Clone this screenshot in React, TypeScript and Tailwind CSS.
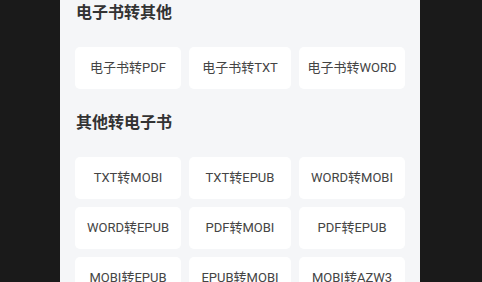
const toOther = ["电子书转PDF", "电子书转TXT", "电子书转WORD"];
const toEbook = [
  "TXT转MOBI",
  "TXT转EPUB",
  "WORD转MOBI",
  "WORD转EPUB",
  "PDF转MOBI",
  "PDF转EPUB",
  "MOBI转EPUB",
  "EPUB转MOBI",
  "MOBI转AZW3",
];

function Section({ title, items }: { title: string; items: string[] }) {
  return (
    <section>
      <h2 className="text-[16px] leading-[24px] font-semibold text-[#333333] pl-px">{title}</h2>
      <div className="mt-[22px] grid grid-cols-[106px_102px_106px] gap-2">
        {items.map((item) => (
          <div
            key={item}
            className="h-[42px] bg-white rounded-[5px] flex items-center justify-center text-[13px] text-[#444444]"
          >
            {item}
          </div>
        ))}
      </div>
    </section>
  );
}

export default function App() {
  return (
    <div
      className="h-[282px] overflow-hidden bg-[#1a1a1a] flex justify-center"
      style={{ fontFamily: "Roboto, 'Noto Sans CJK SC', sans-serif" }}
    >
      <div className="w-[360px] ml-[-2px] bg-[#f5f6f8] px-[15px] pt-px flex flex-col gap-[22px]">
        <Section title="电子书转其他" items={toOther} />
        <Section title="其他转电子书" items={toEbook} />
      </div>
    </div>
  );
}
